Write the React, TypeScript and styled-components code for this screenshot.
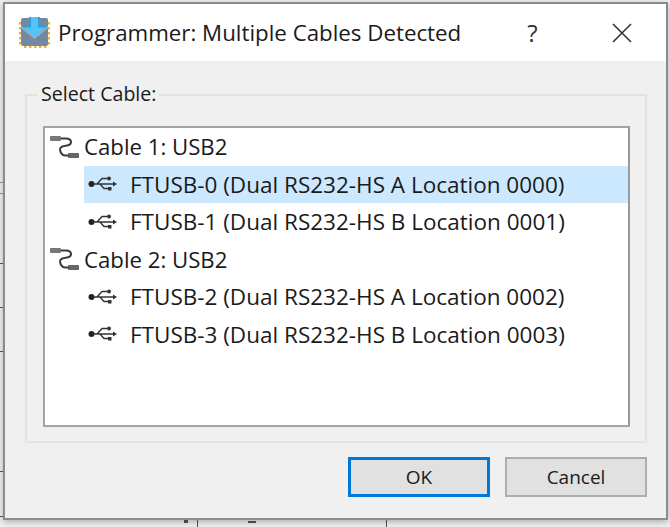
import styled, { createGlobalStyle } from "styled-components";

const GlobalStyle = createGlobalStyle`
    html, body {
        margin: 0;
        padding: 0;
        width: 670px;
        height: 527px;
        overflow: hidden;
        background: #f2f2f2;
    }
`;

const Desktop = styled.div`
    position: relative;
    box-sizing: border-box;
    width: 670px;
    height: 527px;
    padding: 2px 2px 7px 3px;
    font-family: "Open Sans", "Noto Sans", sans-serif;
    color: #1a1a1a;
`;

const Tick = styled.i<{ $x: number; $y: number; $w: number; $h: number; $light?: boolean }>`
    position: absolute;
    left: ${(p) => p.$x}px;
    top: ${(p) => p.$y}px;
    width: ${(p) => p.$w}px;
    height: ${(p) => p.$h}px;
    background: ${(p) => (p.$light ? "#9a9a9a" : "#555")};
`;

const Window = styled.div`
    position: relative;
    box-sizing: border-box;
    height: 100%;
    display: flex;
    flex-direction: column;
    border: 2px solid #8c8c8c;
    background: #f0f0f0;
    box-shadow: 0 2px 7px rgba(0, 0, 0, 0.3);
`;

const TitleBar = styled.div`
    display: flex;
    align-items: center;
    height: 57px;
    padding-left: 13px;
    background: #fff;
`;

const TitleText = styled.span`
    margin-left: 6px;
    font-size: 22.3px;
    white-space: nowrap;
`;

const HelpMark = styled.span`
    margin-left: 66px;
    font-size: 24px;
    color: #333;
`;

const CloseIcon = styled.svg`
    margin-left: 73px;
    width: 22px;
    height: 22px;
`;

const Body = styled.div`
    flex: 1;
    display: flex;
    flex-direction: column;
    padding: 33px 19px 0 20px;
`;

const Group = styled.div`
    position: relative;
    box-sizing: border-box;
    height: 349px;
    display: flex;
    flex-direction: column;
    padding: 30px 15px 14px 16px;
    border: 2px solid #e3e3e3;
`;

const GroupLabel = styled.span`
    position: absolute;
    left: 11px;
    top: -16px;
    padding: 0 3px;
    background: #f0f0f0;
    font-size: 19.6px;
    line-height: 28px;
    white-space: nowrap;
`;

const Tree = styled.div`
    flex: 1;
    background: #fff;
    border: 2px solid #a0a4ac;
    border-right-color: #9a9a9a;
`;

const CableRow = styled.div`
    display: flex;
    align-items: center;
    height: 37.5px;
    padding-left: 4px;
    font-size: 22.2px;
    white-space: nowrap;
`;

const PortRow = styled.div<{ $selected?: boolean }>`
    display: flex;
    align-items: center;
    height: 37.5px;
    margin-left: 39px;
    padding-left: 4px;
    background: ${(p) => (p.$selected ? "#cce8ff" : "transparent")};
    font-size: 22.5px;
    white-space: nowrap;
`;

const RowLabel = styled.span`
    margin-left: 3px;
`;

const PortLabel = styled.span`
    margin-left: 11px;
`;

const Actions = styled.div`
    display: flex;
    justify-content: flex-end;
    gap: 15px;
    margin-top: 14px;
`;

const Button = styled.button<{ $primary?: boolean }>`
    box-sizing: border-box;
    width: 142px;
    height: 40px;
    padding: 0;
    background: #e1e1e1;
    border: ${(p) => (p.$primary ? "3px solid #0078d7" : "2px solid #adadad")};
    font-family: inherit;
    font-size: 19px;
    color: #1a1a1a;
`;

const AppIcon = () => (
    <svg width="34" height="34" viewBox="0 0 34 34">
        <g fill="#e9b13c">
            {[6, 11, 16, 21, 26].map((p) => (
                <g key={p}>
                    <rect x={p} y="29" width="2.5" height="3" />
                    <rect x="1" y={p} width="3" height="2.5" />
                    <rect x="29" y={p} width="3" height="2.5" />
                </g>
            ))}
        </g>
        <rect x="3" y="2" width="27" height="28" rx="2" fill="#73899f" />
        <path d="M3 12l13.5 11L30 12v-2L16.5 21 3 10z" fill="#9fb0c0" />
        <path d="M11 1h11v9h7L16.5 22 4 10h7z" fill="#55c3f7" />
        <path d="M11 1v9H4l1.5 1.5H13V1zM22 1v9h7l-1.5 1.5H20V1z" fill="#2e9fe0" />
    </svg>
);

const CableIcon = () => (
    <svg width="32" height="28" viewBox="0 0 32 28" fill="none">
        <rect x="1" y="3" width="11" height="5" rx="1" fill="#777" />
        <rect x="19" y="20" width="11" height="5" rx="1" fill="#666" />
        <path
            d="M12 5.5h5c3.5 0 5 1.6 5 3.6s-1.5 3.4-5 3.6c-4 .3-6 1.6-6 3.8s2 6 5 6h4"
            stroke="#3c3c3c"
            strokeWidth="2"
        />
    </svg>
);

const UsbIcon = () => (
    <svg width="31" height="18" viewBox="0 0 31 18" fill="none">
        <circle cx="3.5" cy="9" r="3" fill="#222" />
        <path d="M5 9h21M9 9l5-5.5h5M12 9l4 4.5h5" stroke="#333" strokeWidth="1.4" />
        <circle cx="21" cy="3.5" r="2" fill="#333" />
        <rect x="20" y="12" width="3.5" height="3.5" fill="#333" />
        <path d="M25 6.5v5l4-2.5z" fill="#333" />
    </svg>
);

const cables = [
    {
        name: "Cable 1: USB2",
        ports: [
            { label: "FTUSB-0 (Dual RS232-HS A Location 0000)", selected: true },
            { label: "FTUSB-1 (Dual RS232-HS B Location 0001)" },
        ],
    },
    {
        name: "Cable 2: USB2",
        ports: [
            { label: "FTUSB-2 (Dual RS232-HS A Location 0002)" },
            { label: "FTUSB-3 (Dual RS232-HS B Location 0003)" },
        ],
    },
];

export default function App() {
    return (
        <>
            <GlobalStyle />
            <Desktop>
                <Tick $light $x={0} $y={182} $w={3} $h={1} />
                <Tick $light $x={0} $y={193} $w={3} $h={1} />
                <Tick $x={0} $y={263} $w={3} $h={1} />
                <Tick $x={0} $y={307} $w={3} $h={1} />
                <Tick $x={0} $y={351} $w={3} $h={1} />
                <Tick $x={0} $y={471} $w={3} $h={1} />
                <Tick $x={0} $y={516} $w={3} $h={1} />
                <Tick $x={184} $y={520} $w={4} $h={3} />
                <Tick $x={197} $y={520} $w={1} $h={7} />
                <Tick $x={248} $y={521} $w={8} $h={2} />
                <Tick $x={386} $y={520} $w={1} $h={7} />
                <Window>
                    <TitleBar>
                        <AppIcon />
                        <TitleText>Programmer: Multiple Cables Detected</TitleText>
                        <HelpMark>?</HelpMark>
                        <CloseIcon viewBox="0 0 22 22">
                            <path d="M2 2l18 18M20 2L2 20" stroke="#333" strokeWidth="1.6" />
                        </CloseIcon>
                    </TitleBar>
                    <Body>
                        <Group>
                            <GroupLabel>Select Cable:</GroupLabel>
                            <Tree>
                                {cables.map((cable) => (
                                    <div key={cable.name}>
                                        <CableRow>
                                            <CableIcon />
                                            <RowLabel>{cable.name}</RowLabel>
                                        </CableRow>
                                        {cable.ports.map((port) => (
                                            <PortRow key={port.label} $selected={port.selected}>
                                                <UsbIcon />
                                                <PortLabel>{port.label}</PortLabel>
                                            </PortRow>
                                        ))}
                                    </div>
                                ))}
                            </Tree>
                        </Group>
                        <Actions>
                            <Button $primary>OK</Button>
                            <Button>Cancel</Button>
                        </Actions>
                    </Body>
                </Window>
            </Desktop>
        </>
    );
}
